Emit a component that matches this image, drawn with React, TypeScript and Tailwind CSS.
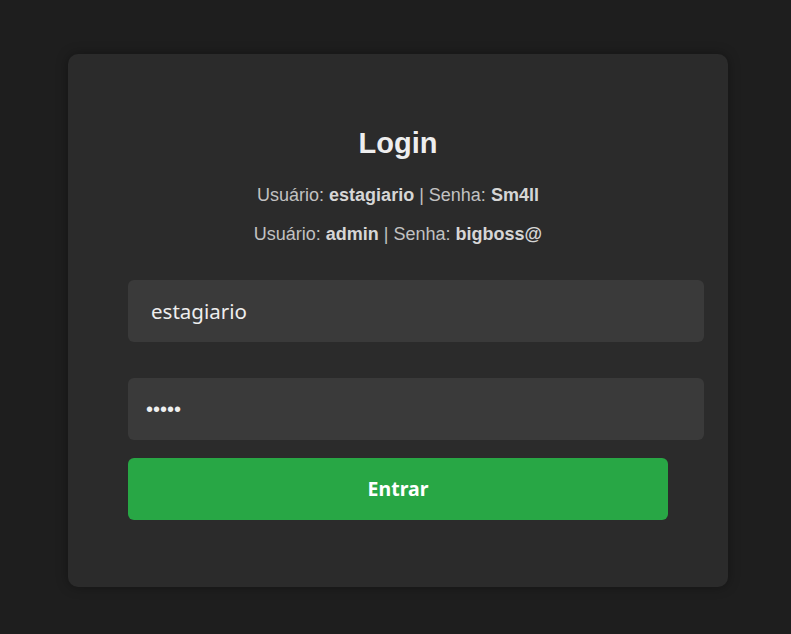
export default function App() {
  return (
    <div className="min-h-[634px] w-full bg-[#1e1e1e] pt-[54px] pl-[68px] font-['Liberation_Sans',Arial,sans-serif]">
      <div className="w-[660px] h-[533px] rounded-[10px] bg-[#2b2b2b] shadow-[0_0_12px_rgba(0,0,0,0.35)] px-[60px] pt-[73px]">
        {/* Encabezado */}
        <h2 className="text-center text-[29px] leading-8 font-bold text-[#eeeeee]">
          Login
        </h2>
        <p className="mt-6 text-center text-[18px] leading-6 text-[#c2c2c2]">
          Usuário: <b className="text-[#d6d6d6]">estagiario</b> | Senha:{" "}
          <b className="text-[#d6d6d6]">Sm4ll</b>
        </p>
        <p className="mt-[15px] text-center text-[18px] leading-6 text-[#c2c2c2]">
          Usuário: <b className="text-[#d6d6d6]">admin</b> | Senha:{" "}
          <b className="text-[#d6d6d6]">bigboss@</b>
        </p>

        {/* Formulario */}
        <form className="mt-[34px]" onSubmit={(e) => e.preventDefault()}>
          <input
            type="text"
            defaultValue="estagiario"
            className="block w-[576px] h-[62px] rounded-[6px] bg-[#3a3a3a] px-[23px] text-[20.5px] text-[#eeeeee] font-['Noto_Sans',sans-serif] outline-none"
          />
          <input
            type="password"
            defaultValue="12345"
            className="mt-9 block w-[576px] h-[62px] rounded-[6px] bg-[#3a3a3a] px-[18px] text-[20px] text-[#eeeeee] font-['Liberation_Sans',sans-serif] outline-none"
          />
          <button
            type="submit"
            className="mt-[18px] block w-[540px] h-[62px] rounded-[6px] bg-[#28a745] text-white text-[19.5px] font-bold font-['Noto_Sans',sans-serif]"
          >
            Entrar
          </button>
        </form>
      </div>
    </div>
  );
}
